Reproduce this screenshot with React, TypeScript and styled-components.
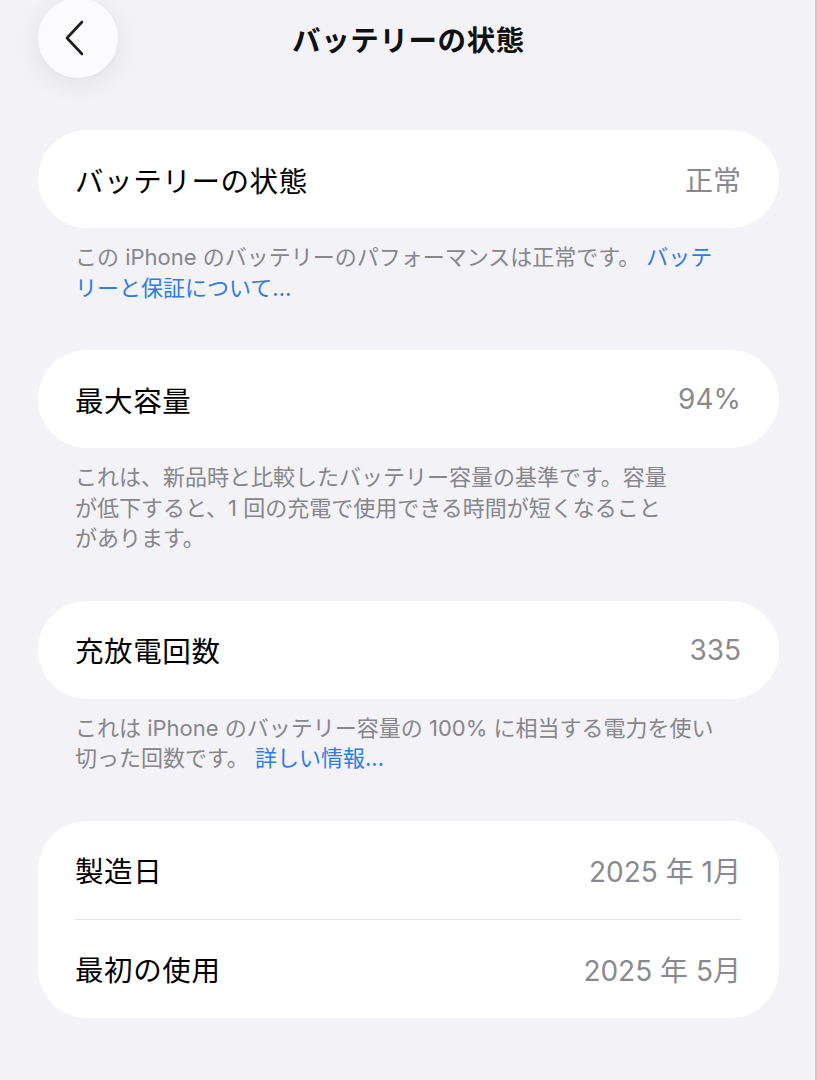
import styled, { createGlobalStyle } from 'styled-components';

const GlobalStyle = createGlobalStyle`
  html, body {
    margin: 0;
    padding: 0;
    background: #f2f2f7;
  }
  body {
    font-family: Inter, "Noto Sans CJK JP", sans-serif;
    -webkit-font-smoothing: antialiased;
  }
`;

const Page = styled.div`
  min-height: 1080px;
  box-sizing: border-box;
  padding: 0 38px 40px;
  background: #f2f2f7;
  box-shadow: inset -2px 0 0 #c9c9ce;
  overflow: hidden;
`;

const Header = styled.header`
  display: grid;
  grid-template-columns: 80px 1fr 80px;
  align-items: center;
  height: 78px;
  margin-top: -2px;
  margin-bottom: 54px;
`;

const BackButton = styled.button`
  width: 80px;
  height: 80px;
  border: none;
  border-radius: 50%;
  background: #fbfbfd;
  box-shadow: 0 6px 24px rgba(0, 0, 0, 0.08);
  display: flex;
  align-items: center;
  justify-content: center;
  padding: 0 6px 0 0;
`;

const Title = styled.h1`
  margin: 0;
  text-align: center;
  font-family: "Noto Sans CJK JP", sans-serif;
  font-size: 28.5px;
  font-weight: 700;
  color: #111;
  letter-spacing: 0.6px;
`;

const Card = styled.section`
  background: #fff;
  border-radius: 49px;
  padding: 0 38px 0 37px;
`;

const Row = styled.div`
  display: flex;
  align-items: center;
  justify-content: space-between;
  height: 98px;

  & + & {
    border-top: 1.5px solid #e2e2e6;
  }
`;

const Label = styled.span`
  font-family: "Noto Sans CJK JP", sans-serif;
  font-size: 28.5px;
  color: #000;
  letter-spacing: 0.6px;
`;

const Value = styled.span`
  font-family: Inter, "Noto Sans CJK JP", sans-serif;
  font-size: 28px;
  color: #8a8a8e;
`;

const Footer = styled.p`
  margin: 14px 0 47px;
  padding: 0 37px;
  font-family: Inter, "Noto Sans CJK JP", sans-serif;
  font-size: 22px;
  line-height: 30.5px;
  color: #86868b;
  white-space: nowrap;
`;

const Link = styled.a`
  color: #2f7de0;
  text-decoration: none;
`;

const Chevron = () => (
  <svg width="22" height="36" viewBox="0 0 22 36" fill="none">
    <path
      d="M18 2 L3 18 L18 34"
      stroke="#1c1c1e"
      strokeWidth="2.6"
      strokeLinecap="round"
      strokeLinejoin="round"
    />
  </svg>
);

export default function App() {
  return (
    <>
      <GlobalStyle />
      <Page>
        <Header>
          <BackButton aria-label="戻る">
            <Chevron />
          </BackButton>
          <Title>バッテリーの状態</Title>
          <span />
        </Header>

        <Card>
          <Row>
            <Label>バッテリーの状態</Label>
            <Value>正常</Value>
          </Row>
        </Card>
        <Footer>
          この iPhone のバッテリーのパフォーマンスは正常です。 <Link href="#">バッテ
          <br />
          リーと保証について...</Link>
        </Footer>

        <Card>
          <Row>
            <Label>最大容量</Label>
            <Value>94%</Value>
          </Row>
        </Card>
        <Footer>
          これは、新品時と比較したバッテリー容量の基準です。容量
          <br />
          が低下すると、1 回の充電で使用できる時間が短くなること
          <br />
          があります。
        </Footer>

        <Card>
          <Row>
            <Label>充放電回数</Label>
            <Value>335</Value>
          </Row>
        </Card>
        <Footer>
          これは iPhone のバッテリー容量の 100% に相当する電力を使い
          <br />
          切った回数です。 <Link href="#">詳しい情報...</Link>
        </Footer>

        <Card>
          <Row>
            <Label>製造日</Label>
            <Value>2025 年 1月</Value>
          </Row>
          <Row>
            <Label>最初の使用</Label>
            <Value>2025 年 5月</Value>
          </Row>
        </Card>
      </Page>
    </>
  );
}
